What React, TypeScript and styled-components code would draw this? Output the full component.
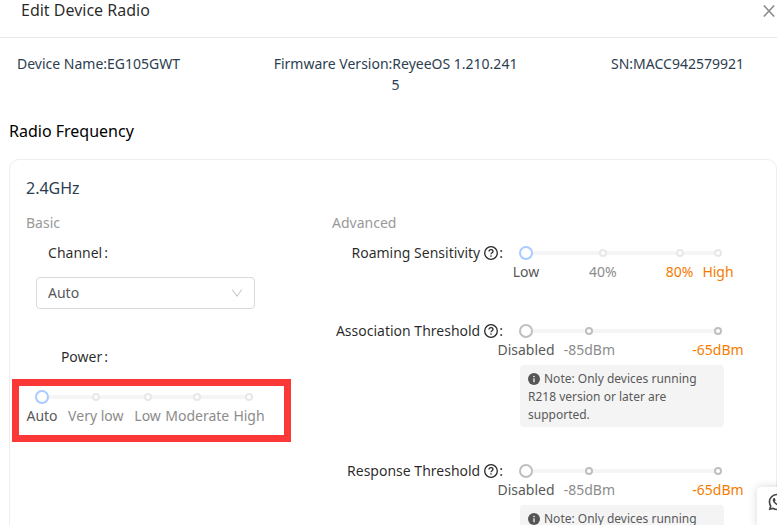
import React, { useId } from 'react';
import styled, { createGlobalStyle } from 'styled-components';
import { RiWhatsappLine } from 'react-icons/ri';

const GlobalStyle = createGlobalStyle`
  * { box-sizing: border-box; }
  body {
    margin: 0;
    background: #fff;
    color: rgba(0, 0, 0, 0.85);
    font-family: "Noto Sans", "Open Sans", sans-serif;
    font-size: 14px;
    line-height: 20px;
  }
  h1, h2, h3, h4, p { margin: 0; font-weight: 400; }
  button, select, input { font: inherit; }
`;

const Dialog = styled.main`
  position: relative;
  height: 100vh;
  overflow: hidden;
`;

const DialogHeader = styled.header`
  display: flex;
  align-items: flex-start;
  justify-content: space-between;
  height: 38px;
  padding: 0 2px 0 21px;
  border-bottom: 1px solid #e8e8e8;
`;

const DialogTitle = styled.h1`
  font-size: 16px;
  line-height: 20px;
`;

const CloseButton = styled.button`
  display: flex;
  padding: 5px 0 0;
  border: 0;
  background: none;
  color: #8c8c8c;
`;

const DeviceInfo = styled.section`
  display: flex;
  justify-content: space-between;
  min-height: 83px;
  padding: 15px 33px 0 17px;
  color: #2c3e50;
  line-height: 21px;
`;

const InfoItem = styled.p`
  max-width: 248px;
  text-align: center;
  word-break: break-all;
`;

const SectionTitle = styled.h2`
  padding: 0 9px;
  color: #000;
  font-size: 16px;
  line-height: 20px;
`;

const Card = styled.section`
  margin: 18px 0 0 9px;
  padding: 18px 16px;
  border: 1px solid #eee;
  border-radius: 10px;
`;

const BandTitle = styled.h3`
  color: #2c3e50;
  font-size: 16px;
  line-height: 20px;
`;

const Columns = styled.div`
  display: grid;
  grid-template-columns: 306px 1fr;
  margin-top: 15px;
`;

const GroupTitle = styled.h4`
  margin-bottom: 10px;
  color: #999;
`;

const FieldLabel = styled.label`
  display: flex;
  justify-content: flex-end;
  gap: 2px;
  width: 82px;
`;

const SelectBox = styled.div`
  position: relative;
  width: 219px;
  margin: 14px 0 38px 10px;

  select {
    width: 100%;
    height: 32px;
    padding: 0 11px;
    border: 1px solid #d9d9d9;
    border-radius: 4px;
    background: #fff;
    color: #595959;
    appearance: none;
  }

  svg {
    position: absolute;
    top: 10px;
    right: 12px;
    pointer-events: none;
  }
`;

const PowerArea = styled.div`
  position: relative;
  margin-top: 20px;
  padding: 0 83px 0 16px;
`;

const Highlight = styled.div`
  position: absolute;
  top: -8px;
  right: 41px;
  bottom: -11px;
  left: -14px;
  border: 7px solid #fc3737;
  pointer-events: none;
`;

const SettingRow = styled.div`
  display: grid;
  grid-template-columns: 171px minmax(0, 192px);
  column-gap: 23px;
  margin-bottom: 34px;
`;

const SettingLabel = styled.label`
  display: flex;
  align-items: center;
  justify-content: flex-end;
  height: 20px;
  white-space: nowrap;

  svg { margin: 0 1px 0 4px; }
`;

const SliderBox = styled.div`
  position: relative;
  height: 44px;
`;

const Range = styled.input<{ $muted: boolean }>`
  display: block;
  width: calc(100% + 14px);
  height: 20px;
  margin: 0 -7px;
  background: linear-gradient(#f5f5f5, #f5f5f5) center / calc(100% - 14px) 4px no-repeat;
  appearance: none;

  &::-webkit-slider-thumb {
    width: 14px;
    height: 14px;
    border: 2px solid ${(p) => (p.$muted ? '#bfbfbf' : '#a9cbff')};
    border-radius: 50%;
    background: #fff;
    appearance: none;
  }
`;

const Dot = styled.span<{ $at: number; $muted: boolean }>`
  position: absolute;
  top: 6px;
  left: ${(p) => p.$at}%;
  width: 8px;
  height: 8px;
  margin-left: -4px;
  border: 2px solid ${(p) => (p.$muted ? '#bfbfbf' : '#e8e8e8')};
  border-radius: 50%;
  background: #fff;
  pointer-events: none;
`;

const Mark = styled.span<{ $at: number; $tone: Tone }>`
  position: absolute;
  top: 19px;
  left: ${(p) => p.$at}%;
  color: ${(p) => tones[p.$tone]};
  white-space: nowrap;
  transform: translateX(-50%);
`;

const Note = styled.p`
  width: 204px;
  margin-left: -6px;
  padding: 5px 8px 3px;
  border-radius: 4px;
  background: #f4f4f4;
  color: #595959;
  font-size: 12px;
  line-height: 18px;
  grid-column: 2;

  svg {
    margin-right: 4px;
    vertical-align: -2px;
  }
`;

const ChatButton = styled.button`
  position: absolute;
  right: -20px;
  bottom: -2px;
  display: flex;
  width: 40px;
  height: 40px;
  padding: 5px 10px;
  border: 0;
  border-radius: 4px;
  background: #fff;
  box-shadow: 0 0 8px rgba(0, 0, 0, 0.16);
  color: #444;
`;

const tones = { current: '#595959', normal: '#8c8c8c', warn: '#f57c00' };
type Tone = keyof typeof tones;
type MarkItem = { at: number; text: string; tone: Tone };

const powerMarks: MarkItem[] = [
  { at: 0, text: 'Auto', tone: 'current' },
  { at: 26, text: 'Very low', tone: 'normal' },
  { at: 51, text: 'Low', tone: 'normal' },
  { at: 75, text: 'Moderate', tone: 'normal' },
  { at: 100, text: 'High', tone: 'normal' },
];
const roamingMarks: MarkItem[] = [
  { at: 0, text: 'Low', tone: 'current' },
  { at: 40, text: '40%', tone: 'normal' },
  { at: 80, text: '80%', tone: 'warn' },
  { at: 100, text: 'High', tone: 'warn' },
];
const thresholdMarks: MarkItem[] = [
  { at: 0, text: 'Disabled', tone: 'current' },
  { at: 33, text: '-85dBm', tone: 'normal' },
  { at: 100, text: '-65dBm', tone: 'warn' },
];

function HelpIcon() {
  return (
    <svg width="14" height="14" viewBox="0 0 14 14" fill="none" stroke="#262626" aria-hidden="true">
      <circle cx="7" cy="7" r="6.3" strokeWidth="1.3" />
      <path d="M5 5.6c0-1.2.9-1.9 2-1.9s2 .7 2 1.7c0 1.2-2 1.4-2 2.8" strokeWidth="1.2" />
      <circle cx="7" cy="10" r=".8" fill="#262626" stroke="none" />
    </svg>
  );
}

function InfoIcon() {
  return (
    <svg width="12" height="12" viewBox="0 0 12 12" aria-hidden="true">
      <circle cx="6" cy="6" r="6" fill="#555" />
      <circle cx="6" cy="3.5" r=".8" fill="#fff" />
      <path d="M6 5.2v4" stroke="#fff" strokeWidth="1.2" />
    </svg>
  );
}

function Slider({ id, marks, muted = false }: { id: string; marks: MarkItem[]; muted?: boolean }) {
  return (
    <SliderBox>
      <Range id={id} type="range" min={0} max={100} defaultValue={0} disabled={muted} $muted={muted} />
      {marks.slice(1).map((m) => (
        <Dot key={m.text} $at={m.at} $muted={muted} />
      ))}
      {marks.map((m) => (
        <Mark key={m.text} $at={m.at} $tone={m.tone}>{m.text}</Mark>
      ))}
    </SliderBox>
  );
}

function Setting({ label, marks, noted = false }: { label: string; marks: MarkItem[]; noted?: boolean }) {
  const id = useId();
  return (
    <SettingRow>
      <SettingLabel htmlFor={id}>{label}<HelpIcon />:</SettingLabel>
      <Slider id={id} marks={marks} muted={noted} />
      {noted && (
        <Note><InfoIcon />Note: Only devices running R218 version or later are supported.</Note>
      )}
    </SettingRow>
  );
}

export default function App() {
  return (
    <>
      <GlobalStyle />
      <Dialog>
        <DialogHeader>
          <DialogTitle>Edit Device Radio</DialogTitle>
          <CloseButton type="button" aria-label="Close">
            <svg width="12" height="12" viewBox="0 0 12 12" stroke="currentColor" strokeWidth="1.6">
              <path d="M.8.5l10.4 11M11.2.5.8 11.5" />
            </svg>
          </CloseButton>
        </DialogHeader>
        <DeviceInfo>
          <InfoItem>Device Name:EG105GWT</InfoItem>
          <InfoItem>Firmware Version:ReyeeOS 1.210.2415</InfoItem>
          <InfoItem>SN:MACC942579921</InfoItem>
        </DeviceInfo>
        <SectionTitle>Radio Frequency</SectionTitle>
        <Card>
          <BandTitle>2.4GHz</BandTitle>
          <Columns>
            <div>
              <GroupTitle>Basic</GroupTitle>
              <FieldLabel htmlFor="channel">Channel<span>:</span></FieldLabel>
              <SelectBox>
                <select id="channel" defaultValue="Auto">
                  <option>Auto</option>
                </select>
                <svg width="12" height="12" viewBox="0 0 12 12" fill="none" stroke="#bfbfbf" aria-hidden="true">
                  <path d="M1.2 2.5 6 9.3l4.8-6.8" />
                </svg>
              </SelectBox>
              <FieldLabel htmlFor="power">Power<span>:</span></FieldLabel>
              <PowerArea>
                <Slider id="power" marks={powerMarks} />
                <Highlight />
              </PowerArea>
            </div>
            <div>
              <GroupTitle>Advanced</GroupTitle>
              <Setting label="Roaming Sensitivity" marks={roamingMarks} />
              <Setting label="Association Threshold" marks={thresholdMarks} noted />
              <Setting label="Response Threshold" marks={thresholdMarks} noted />
            </div>
          </Columns>
        </Card>
        <ChatButton type="button" aria-label="Chat">
          <RiWhatsappLine size={20} />
        </ChatButton>
      </Dialog>
    </>
  );
}
